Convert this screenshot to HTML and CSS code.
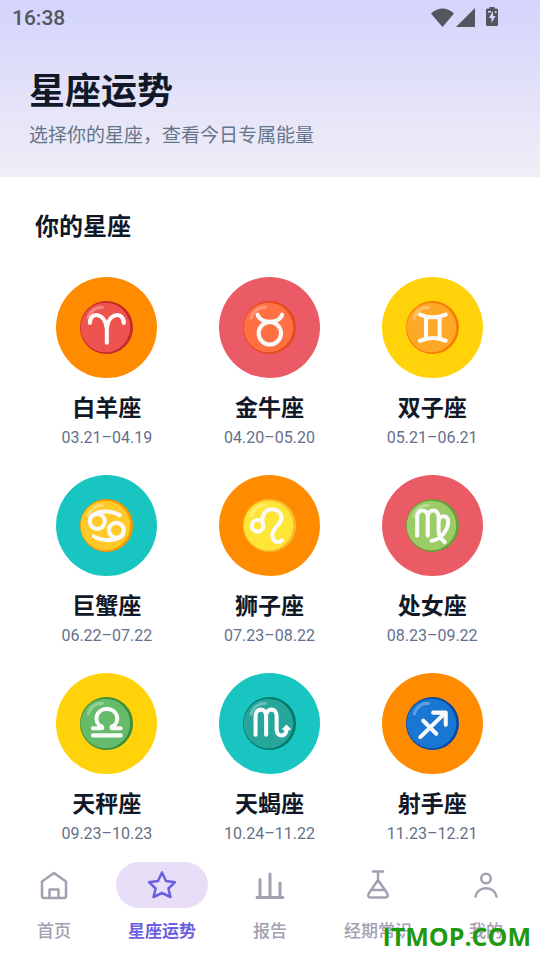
FILE: index.html
```html
<!DOCTYPE html>
<html lang="zh-CN">
<head>
<meta charset="utf-8">
<meta name="viewport" content="width=device-width, initial-scale=1">
<title>星座运势</title>
<link rel="stylesheet" href="styles.css">
</head>
<body>
<svg class="defs" width="0" height="0" aria-hidden="true">
  <symbol id="shine" viewBox="0 0 156 156"><path d="M24 50C30 28 48 17 66 19" fill="none" stroke="#fff" stroke-opacity=".3" stroke-width="9" stroke-linecap="round"/></symbol>
</svg>
<header class="hero">
  <div class="status">
    <span>16:38</span>
    <svg class="status-icons" viewBox="0 0 68 22" width="68" height="22" fill="currentColor" aria-hidden="true">
      <path d="M0 6.500Q11.500-3.500 23 6.500L11.500 20z"/>
      <path d="M44 1V20H25z"/>
      <path d="M58.500 0h5v1.500h2q1.500 0 1.500 1.500v14.500q0 1.500-1.500 1.500h-9q-1.500 0-1.500-1.500V3q0-1.500 1.500-1.500h2z"/>
      <path d="M62 4l-4 7h2.500v5l4-7H62zM57 4h3v1.500h-3zM64 4h1.500v2H64z" fill="#d8d8fa"/>
    </svg>
  </div>
  <h1>星座运势</h1>
  <p>选择你的星座，查看今日专属能量</p>
</header>
<main>
  <h2>你的星座</h2>
  <div class="signs">
    <button class="sign" type="button">
      <span class="disc orange"><svg viewBox="0 0 156 156" aria-hidden="true"><circle cx="78" cy="78" r="78" fill="#c62828"/><circle cx="75" cy="78" r="73" fill="#ef5350"/><use href="#shine"/><path d="M29 65C29 32 73 30 79 82V123V82C84 30 129 32 129 65" class="mark"/></svg></span>
      <span class="name">白羊座</span><span class="date">03.21–04.19</span>
    </button>
    <button class="sign" type="button">
      <span class="disc red"><svg viewBox="0 0 156 156" aria-hidden="true"><circle cx="78" cy="78" r="78" fill="#e64a19"/><circle cx="75" cy="78" r="73" fill="#ff7043"/><use href="#shine"/><circle cx="79" cy="95" r="33" class="mark"/><path d="M43 40C51 68 107 68 115 40" class="mark"/></svg></span>
      <span class="name">金牛座</span><span class="date">04.20–05.20</span>
    </button>
    <button class="sign" type="button">
      <span class="disc yellow"><svg viewBox="0 0 156 156" aria-hidden="true"><circle cx="78" cy="78" r="78" fill="#f57c00"/><circle cx="75" cy="78" r="73" fill="#ffa726"/><use href="#shine"/><path d="M41 40Q79 56 117 40M41 117Q79 101 117 117M59 48V108M99 48V108" class="mark"/></svg></span>
      <span class="name">双子座</span><span class="date">05.21–06.21</span>
    </button>
    <button class="sign" type="button">
      <span class="disc teal"><svg viewBox="0 0 156 156" aria-hidden="true"><circle cx="78" cy="78" r="78" fill="#fb9600"/><circle cx="75" cy="78" r="73" fill="#ffca28"/><use href="#shine"/><circle cx="51" cy="66" r="22" class="mark"/><circle cx="107" cy="92" r="22" class="mark"/><path d="M31 55C43 34 89 31 117 48M127 103C115 124 69 127 41 110" class="mark"/></svg></span>
      <span class="name">巨蟹座</span><span class="date">06.22–07.22</span>
    </button>
    <button class="sign" type="button">
      <span class="disc orange"><svg viewBox="0 0 156 156" aria-hidden="true"><circle cx="78" cy="78" r="78" fill="#f5bd2e"/><circle cx="75" cy="78" r="73" fill="#ffe535"/><use href="#shine"/><circle cx="43" cy="79" r="17" class="mark"/><path d="M58 70C56 58 57 45 68 36C85 23 113 34 113 55C113 76 86 84 86 107C86 127 106 131 115 121" class="mark"/></svg></span>
      <span class="name">狮子座</span><span class="date">07.23–08.22</span>
    </button>
    <button class="sign" type="button">
      <span class="disc red"><svg viewBox="0 0 156 156" aria-hidden="true"><circle cx="78" cy="78" r="78" fill="#689f38"/><circle cx="75" cy="78" r="73" fill="#9ccc65"/><use href="#shine"/><path d="M33 108V54C33 27 64 27 64 54V108V54C64 27 96 27 96 54V96C96 111 105 119 114 127M96 65C99 45 124 46 124 67C124 92 100 121 75 123" class="mark"/></svg></span>
      <span class="name">处女座</span><span class="date">08.23–09.22</span>
    </button>
    <button class="sign" type="button">
      <span class="disc yellow"><svg viewBox="0 0 156 156" aria-hidden="true"><circle cx="78" cy="78" r="78" fill="#388e3c"/><circle cx="75" cy="78" r="73" fill="#66bb6a"/><use href="#shine"/><path d="M38 92H65V88C36 74 47 35 79 35S122 74 93 88V92H120M38 113H120" class="mark"/></svg></span>
      <span class="name">天秤座</span><span class="date">09.23–10.23</span>
    </button>
    <button class="sign" type="button">
      <span class="disc teal"><svg viewBox="0 0 156 156" aria-hidden="true"><circle cx="78" cy="78" r="78" fill="#00796b"/><circle cx="75" cy="78" r="73" fill="#26a69a"/><use href="#shine"/><path d="M37 111V56C37 31 68 31 68 56V111V56C68 31 99 31 99 56V97C99 119 128 119 128 96V93" class="mark"/><path d="M115 94L128 81L141 94L138 98H118z" fill="#fafafa"/></svg></span>
      <span class="name">天蝎座</span><span class="date">10.24–11.22</span>
    </button>
    <button class="sign" type="button">
      <span class="disc orange"><svg viewBox="0 0 156 156" aria-hidden="true"><circle cx="78" cy="78" r="78" fill="#0d47a1"/><circle cx="75" cy="78" r="73" fill="#1976d2"/><use href="#shine"/><path d="M42 118L116 46M80 46H117V82M51 70L89 108" class="mark"/></svg></span>
      <span class="name">射手座</span><span class="date">11.23–12.21</span>
    </button>
  </div>
</main>
<nav class="tabs">
  <a href="#home"><span class="pill"><svg viewBox="0 0 32 32" aria-hidden="true"><path d="M4 12.500L16 4l12 8.500V27q0 2-2 2H6q-2 0-2-2zM11.500 29v-8.500h9V29"/></svg></span><span>首页</span></a>
  <a href="#signs" class="active" aria-current="page"><span class="pill"><svg viewBox="0 0 32 32" aria-hidden="true"><path d="M16 3.500l4 8.500 9 1.200-6.600 6.300L24.500 28 16 24l-8.500 4 2.100-8.500L3 13.200 12 12z"/></svg></span><span>星座运势</span></a>
  <a href="#report"><span class="pill"><svg class="bars" viewBox="0 0 32 32" aria-hidden="true"><path d="M3 28.500h26M6 28V10.500M16 28V5M26 28V14"/></svg></span><span>报告</span></a>
  <a href="#knowledge"><span class="pill"><svg viewBox="0 0 32 32" aria-hidden="true"><path d="M11 2.500h10M16 2.500V11M16 11L7 24q-2 4.500 1.500 4.500h15q3.500 0 1.500-4.500zM10 21h12"/></svg></span><span>经期常识</span></a>
  <a href="#me"><span class="pill"><svg viewBox="0 0 32 32" aria-hidden="true"><circle cx="16" cy="9.500" r="4.800"/><path d="M5.500 27.500C8 16.500 24 16.500 26.500 27.500"/></svg></span><span>我的</span></a>
  <span class="watermark">ITMOP.COM</span>
</nav>
</body>
</html>
```
FILE: styles.css
```css
* { box-sizing: border-box; }

body {
  margin: 0;
  min-height: 100vh;
  display: flex;
  flex-direction: column;
  background: #fff;
  color: #111827;
  font-family: Roboto, "Noto Sans CJK SC", sans-serif;
}

.defs { position: absolute; }

h1, h2, p { margin: 0; }

.hero {
  padding-bottom: 27px;
  background: linear-gradient(#d4d4fc, #f0eef6);
}

.status {
  display: flex;
  justify-content: space-between;
  align-items: center;
  height: 36px;
  padding: 0 41px 0 12px;
  color: #55555f;
  font-size: 21px;
  font-weight: 500;
}

.hero h1 {
  margin: 32px 29px 6px;
  font-size: 36px;
  line-height: 48px;
  font-weight: 700;
}

.hero p {
  margin: 0 29px;
  color: #64748b;
  font-size: 19px;
  line-height: 28px;
}

main { padding: 32px 35px 0; }

h2 {
  font-size: 24px;
  line-height: 36px;
  font-weight: 700;
}

.signs {
  display: grid;
  grid-template-columns: repeat(3, 1fr);
  gap: 25px 19px;
  margin: 32px 1px 0 0;
}

.sign {
  display: flex;
  flex-direction: column;
  align-items: center;
  padding: 0;
  border: 0;
  background: none;
  color: inherit;
  font: inherit;
}

.disc {
  display: grid;
  place-items: center;
  width: 101px;
  height: 101px;
  border-radius: 50%;
}

.disc svg { width: 53px; height: 53px; }

.orange { background: #ff8c00; }
.red { background: #ea5b65; }
.yellow { background: #ffd20a; }
.teal { background: #18c5c1; }

.mark {
  fill: none;
  stroke: #fafafa;
  stroke-width: 12;
  stroke-linecap: round;
  stroke-linejoin: round;
}

.name {
  margin-top: 14px;
  font-size: 23px;
  line-height: 34px;
  font-weight: 700;
}

.date {
  color: #64708b;
  font-size: 16px;
  line-height: 24px;
}

.tabs {
  position: relative;
  display: grid;
  grid-template-columns: repeat(5, 1fr);
  margin-top: auto;
  padding: 12px 0 17px;
}

.tabs a {
  display: flex;
  flex-direction: column;
  align-items: center;
  gap: 11px;
  color: #a3a1b1;
  font-size: 17px;
  line-height: 24px;
  font-weight: 500;
  text-decoration: none;
}

.pill {
  display: grid;
  place-items: center;
  width: 92px;
  height: 46px;
  border-radius: 23px;
}

.pill svg {
  width: 32px;
  height: 32px;
  fill: none;
  stroke: currentColor;
  stroke-width: 2.5;
  stroke-linecap: round;
  stroke-linejoin: round;
}

.pill .bars { stroke-width: 3; }

.tabs .active { color: #6a5fe0; font-weight: 700; }
.active .pill { background: #e8def8; }

.watermark {
  position: absolute;
  right: 9px;
  bottom: 6px;
  color: #22980f;
  font: 700 25px/36px "Open Sans", sans-serif;
}
```
